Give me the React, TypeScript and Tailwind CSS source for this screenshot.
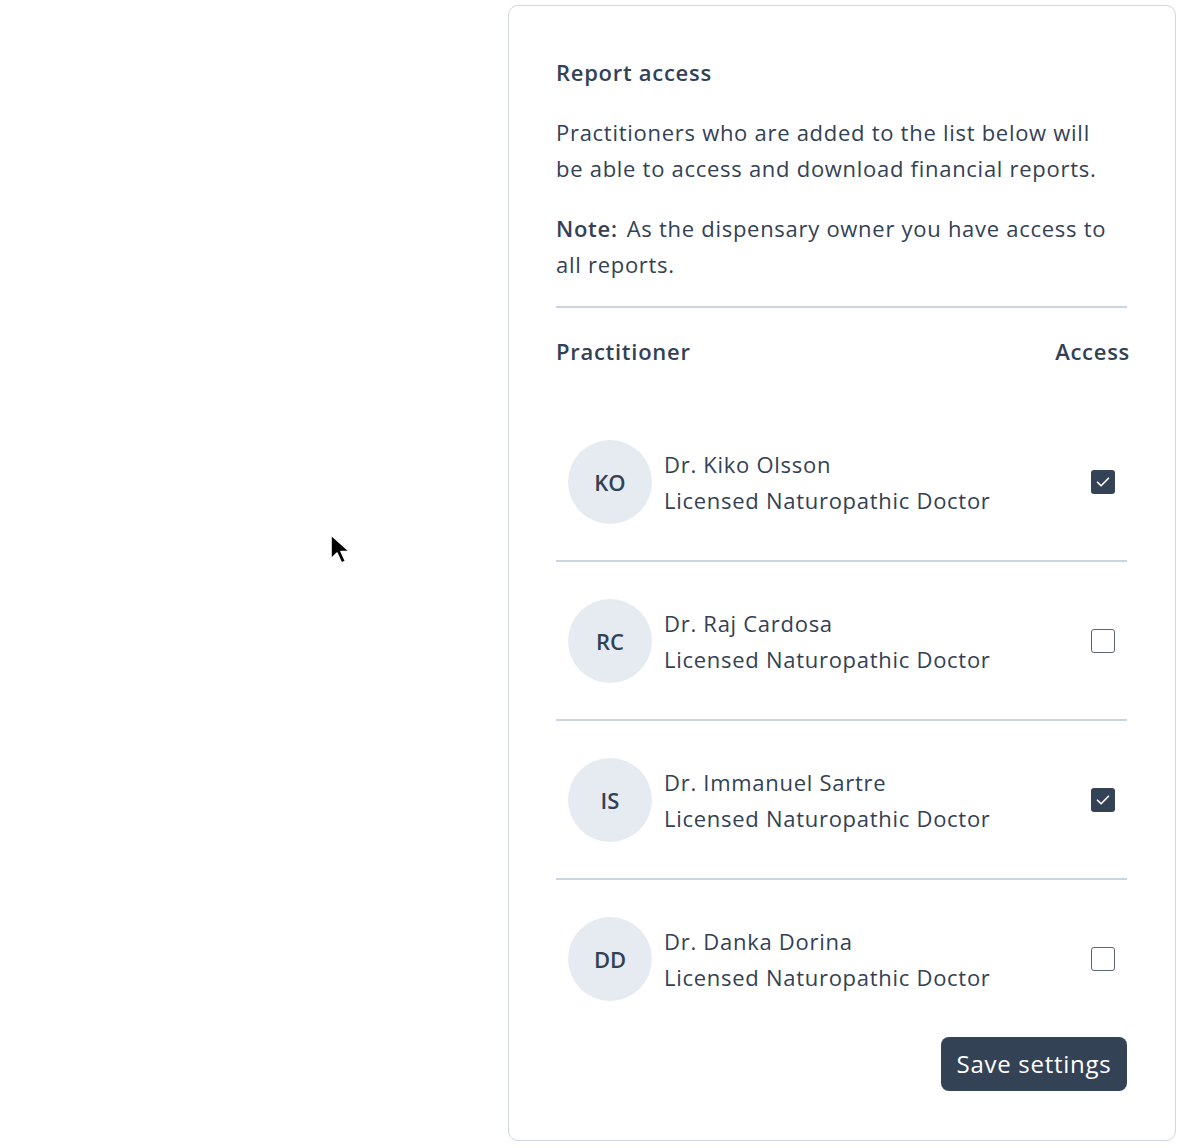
import React from 'react';

type Practitioner = {
  initials: string;
  name: string;
  title: string;
  access: boolean;
};

const practitioners: Practitioner[] = [
  { initials: 'KO', name: 'Dr. Kiko Olsson', title: 'Licensed Naturopathic Doctor', access: true },
  { initials: 'RC', name: 'Dr. Raj Cardosa', title: 'Licensed Naturopathic Doctor', access: false },
  { initials: 'IS', name: 'Dr. Immanuel Sartre', title: 'Licensed Naturopathic Doctor', access: true },
  { initials: 'DD', name: 'Dr. Danka Dorina', title: 'Licensed Naturopathic Doctor', access: false },
];

const Checkbox = ({ checked }: { checked: boolean }) =>
  checked ? (
    <span className="flex h-6 w-6 items-center justify-center rounded-[3px] bg-[#344256]">
      <svg width="18" height="18" viewBox="0 0 18 18" fill="none">
        <path d="M3.5 9.2l3.6 3.6 7.4-7.6" stroke="white" strokeWidth="1.6" strokeLinecap="round" strokeLinejoin="round" />
      </svg>
    </span>
  ) : (
    <span className="block h-6 w-6 rounded-[3px] border border-[#5b6675] bg-white" />
  );

export default function App() {
  return (
    <div
      className="relative flex min-h-[1148px] justify-end bg-white pr-[12px] pt-[5px] text-[#334155] tracking-[0.045em]"
      style={{ fontFamily: '"Open Sans", "Noto Sans", Arial, sans-serif' }}
    >
      {/* mouse cursor */}
      <svg className="absolute left-[329px] top-[533px]" width="22" height="34" viewBox="0 0 22 34">
        <path d="M2 2v24l6-6 4.5 10 4-1.8L12 18.5h8.5z" fill="black" stroke="white" strokeWidth="1.6" strokeLinejoin="round" />
      </svg>

      <div className="w-[668px] self-start rounded-[10px] border border-[#cfd6df] pl-[47px] pr-[48px] pt-[50px] pb-[49px] flex flex-col">
        {/* Header */}
        <h2 className="text-[22px] font-semibold leading-[32px]">Report access</h2>
        <p className="mt-[26px] max-w-[560px] text-[22px] leading-[36px]">
          Practitioners who are added to the list below will be able to access and download financial reports.
        </p>
        <p className="mt-[24px] max-w-[560px] text-[22px] leading-[36px]">
          <strong className="mr-[9px] font-semibold">Note:</strong>
          As the dispensary owner you have access to all reports.
        </p>
        <div className="mt-[24px] h-[2px] shrink-0 bg-[#cbd5e1]" />

        {/* Table header */}
        <div className="mt-[25px] flex items-center justify-between text-[22px] font-semibold leading-[36px]">
          <span>Practitioner</span>
          <span className="-mr-[3px]">Access</span>
        </div>

        {/* Rows */}
        <div className="mt-[34px] flex flex-col">
          {practitioners.map((p, idx) => {
            const last = idx === practitioners.length - 1;
            return (
              <div
                key={p.initials}
                className={`flex items-center ${last ? 'pt-[37px] pb-[36px]' : 'pt-[37px] pb-[36px] border-b-2 border-[#cbd5e1]'}`}
              >
                <div className="ml-[12px] flex h-[84px] w-[84px] shrink-0 items-center justify-center rounded-full bg-[#e5ebf1] text-[22px] font-semibold tracking-normal">
                  {p.initials}
                </div>
                <div className="ml-[12px] flex-1 text-[22px] leading-[36px]">
                  <div>{p.name}</div>
                  <div>{p.title}</div>
                </div>
                <div className="mr-[12px]">
                  <Checkbox checked={p.access} />
                </div>
              </div>
            );
          })}
        </div>

        {/* Footer */}
        <div className="flex justify-end">
          <button className="h-[54px] w-[186px] rounded-[8px] bg-[#344256] text-[24px] font-medium text-white">
            Save settings
          </button>
        </div>
      </div>
    </div>
  );
}
